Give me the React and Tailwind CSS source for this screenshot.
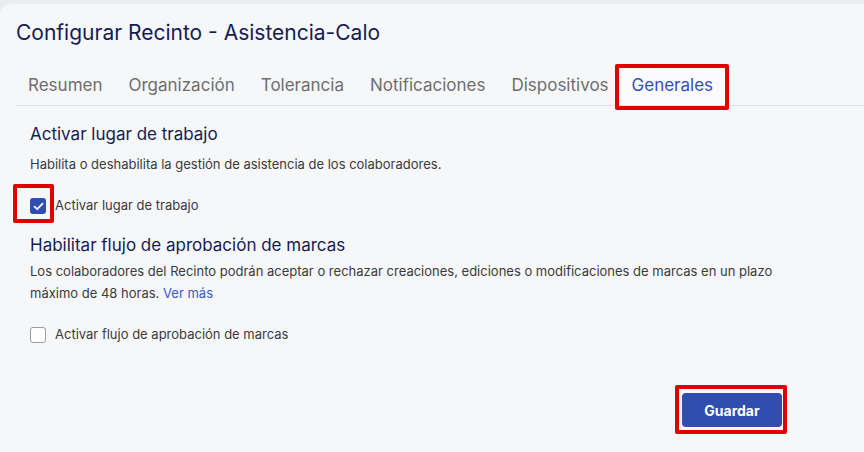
import React from "react";

const tabs = ["Resumen", "Organización", "Tolerancia", "Notificaciones", "Dispositivos", "Generales"];

export default function App() {
  return (
    <div className="w-[864px] h-[452px] bg-[#ebecef] pt-[4px] overflow-hidden" style={{ fontFamily: "Inter, 'Open Sans', sans-serif" }}>
      <div className="h-[448px] bg-[#f6f7f9] rounded-tl-[10px]">
        <h1 className="pl-[16px] pt-[15px] text-[21px] leading-[28px] text-[#161c52] font-normal">
          Configurar Recinto - Asistencia-Calo
        </h1>
        <div className="ml-[16px] mt-[19px] flex h-[40px] border-b border-[#e2e3e7]">
          {tabs.map((t) => {
            const active = t === "Generales";
            return (
              <div
                key={t}
                className={
                  "relative flex items-center px-[12px] mr-[2px] text-[17px] " +
                  (active ? "text-[#3350b4] bg-[#fbfbfd] ml-[-3px]" : "text-[#6e6e70]")
                }
              >
                {t}
                {active && (
                  <span className="absolute left-[-5px] right-[-4px] top-[-2px] bottom-[-5px] border-[4px] border-[#e00000] rounded-[2px]" />
                )}
              </div>
            );
          })}
        </div>
        <div className="px-[30px]">
          <h2 className="mt-[16px] text-[17px] leading-[24px] text-[#161c52]">Activar lugar de trabajo</h2>
          <p className="mt-[8px] text-[13px] leading-[20px] text-[#3a3a3c]">
            Habilita o deshabilita la gestión de asistencia de los colaboradores.
          </p>
          <div className="mt-[22px] flex items-center h-[20px]">
            <span className="relative w-[16px] h-[16px] rounded-[3px] bg-[#2f4ead] flex items-center justify-center">
              <svg width="11" height="9" viewBox="0 0 11 9" fill="none">
                <path d="M1.5 4.6 L4.2 7.2 L9.6 1.6" stroke="white" strokeWidth="1.8" strokeLinecap="round" strokeLinejoin="round" />
              </svg>
              <span className="absolute left-[-17px] top-[-14px] w-[41px] h-[39px] border-[4px] border-[#e00000] rounded-[2px]" />
            </span>
            <span className="ml-[9px] text-[13px] text-[#3a3a3c]">Activar lugar de trabajo</span>
          </div>
          <h2 className="mt-[17px] text-[17px] leading-[24px] text-[#161c52]">Habilitar flujo de aprobación de marcas</h2>
          <p className="mt-[3px] text-[13px] leading-[22px] text-[#3a3a3c] w-[760px]">
            Los colaboradores del Recinto podrán aceptar o rechazar creaciones, ediciones o modificaciones de marcas en un plazo máximo de 48 horas.{" "}
            <span className="text-[#3a5bc5]">Ver más</span>
          </p>
          <div className="mt-[21px] flex items-center h-[20px]">
            <span className="w-[16px] h-[16px] rounded-[3px] border border-[#9c9c9f] bg-white" />
            <span className="ml-[9px] text-[13px] text-[#3a3a3c]">Activar flujo de aprobación de marcas</span>
          </div>
          <div className="mt-[48px] flex justify-end pr-[52px]">
            <div className="relative">
              <button className="w-[100px] h-[34px] rounded-[4px] bg-[#2f4ead] text-white text-[14px] font-bold">
                Guardar
              </button>
              <span className="absolute left-[-7px] right-[-5px] top-[-8px] bottom-[-7px] border-[4px] border-[#e00000] rounded-[2px]" />
            </div>
          </div>
        </div>
      </div>
    </div>
  );
}
